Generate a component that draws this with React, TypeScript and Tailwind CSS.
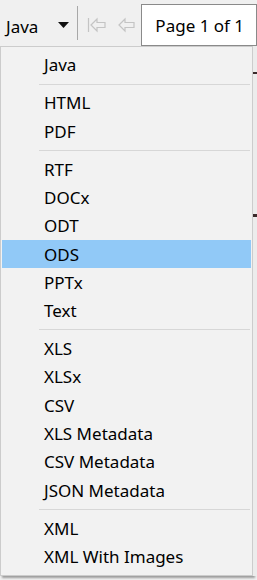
import React from "react"

type Entry = { label: string; active?: boolean } | "sep"

const ENTRIES: Entry[] = [
  { label: "Java" },
  "sep",
  { label: "HTML" },
  { label: "PDF" },
  "sep",
  { label: "RTF" },
  { label: "DOCx" },
  { label: "ODT" },
  { label: "ODS", active: true },
  { label: "PPTx" },
  { label: "Text" },
  "sep",
  { label: "XLS" },
  { label: "XLSx" },
  { label: "CSV" },
  { label: "XLS Metadata" },
  { label: "CSV Metadata" },
  { label: "JSON Metadata" },
  "sep",
  { label: "XML" },
  { label: "XML With Images" },
]

function ArrowIcon({ bar }: { bar?: boolean }) {
  return (
    <svg width="20" height="16" viewBox="0 0 20 16" fill="none" stroke="#c4c4c4" strokeWidth="1.2">
      {bar && <line x1="1.5" y1="1" x2="1.5" y2="15" />}
      <polygon points={bar ? "4,8 10,2 10,5.5 18,5.5 18,10.5 10,10.5 10,14" : "2,8 8,2 8,5.5 17,5.5 17,10.5 8,10.5 8,14"} />
    </svg>
  )
}

export default function App() {
  return (
    <div className="w-[257px] h-[580px] bg-[#f0f0f0] overflow-hidden text-[#000] font-['Noto_Sans',sans-serif]">
      <div className="h-[46px] flex items-center">
        <span className="ml-[6px] text-[17px] leading-none mt-[6px]">Java</span>
        <svg className="ml-[20px] mt-[4px]" width="11" height="6" viewBox="0 0 11 6">
          <polygon points="0,0 11,0 5.5,6" fill="#111" />
        </svg>
        <div className="ml-[8px] w-px h-[34px] bg-[#a8a8a8]" />
        <div className="ml-[9px] mt-[4px]">
          <ArrowIcon bar />
        </div>
        <div className="ml-[10px] mt-[4px]">
          <ArrowIcon />
        </div>
        <div className="ml-[4px] self-start mt-[4px] h-[42px] flex-1 bg-white border border-[#8a8a8a] flex items-center pl-[13px]">
          <span className="text-[17px] leading-none">Page 1 of 1</span>
        </div>
      </div>
      <div className="flex">
        <div className="w-[253px] h-[530px] bg-[#f2f2f2] border border-[#cccccc] shadow-[2px_2px_2px_rgba(0,0,0,0.35)] pt-[4px] px-[1px]">
          {ENTRIES.map((e, i) =>
            e === "sep" ? (
              <div key={i} className="h-[9.7px] flex items-center pl-[37px] pr-[1px]">
                <div className="h-px w-full bg-[#d7d7d7]" />
              </div>
            ) : (
              <div
                key={i}
                className={`h-[28.3px] flex items-center pl-[42px] text-[17px] ${e.active ? "bg-[#91c9f7]" : ""}`}
              >
                {e.label}
              </div>
            )
          )}
        </div>
        <div className="flex-1 bg-[#ececec] flex flex-col">
          <div className="h-[26px]" />
          <div className="h-[2px] bg-[#3a2a2a]" />
          <div className="h-[140px]" />
          <div className="h-[3px] bg-[#3a2a2a]" />
        </div>
      </div>
    </div>
  )
}
